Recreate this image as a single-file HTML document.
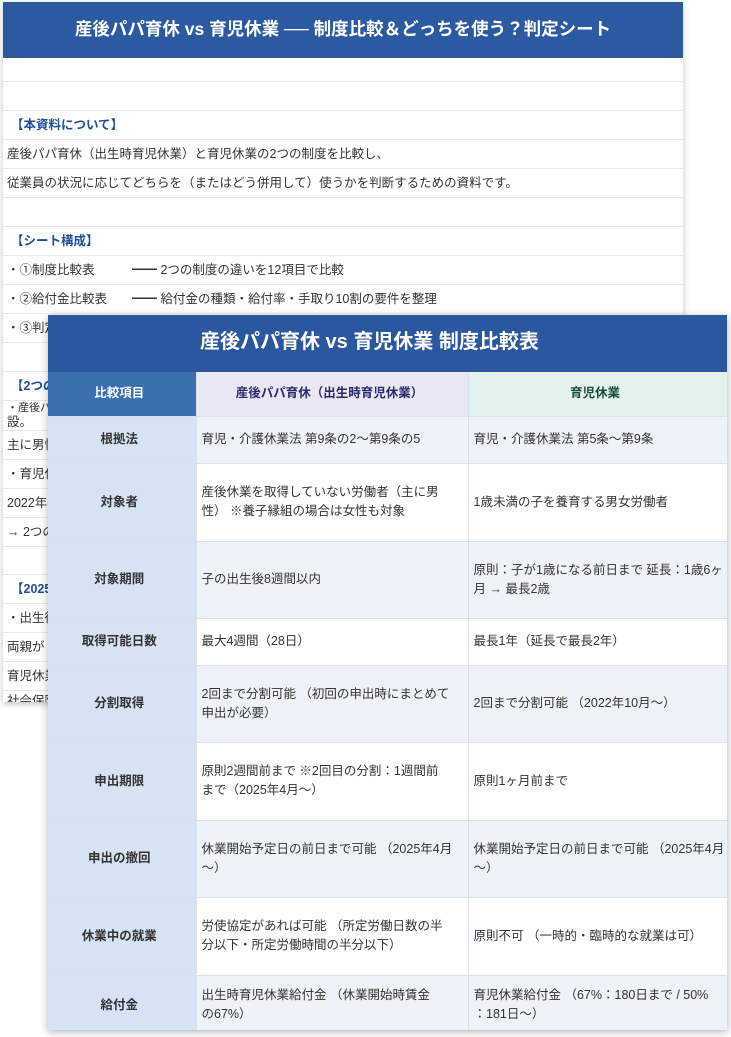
<!DOCTYPE html>
<html><head><meta charset="utf-8"><style>
*{margin:0;padding:0;box-sizing:border-box}
body{width:731px;height:1037px;background:#fff;position:relative;overflow:hidden;font-family:"Liberation Sans","Noto Sans CJK JP",sans-serif;color:#333}
.back{position:absolute;left:3px;top:2px;width:680px;height:700px;background:#fff;box-shadow:0 2px 6px rgba(0,0,0,.25);overflow:hidden}
.back .hd{height:56px;background:#2c5aa0;color:#fff;font-weight:bold;font-size:17.5px;text-align:center;line-height:54px}
.back .r{position:absolute;left:0;width:680px;border-bottom:1px solid #e6e9ee;font-size:12.5px;padding-left:4px;white-space:nowrap}
.blue{color:#1f4f9a;font-weight:bold}
.front{position:absolute;left:48px;top:315px;width:679px;height:715px;background:#fff;box-shadow:0 2px 8px rgba(0,0,0,.3);overflow:hidden}
.front .hd{height:57px;background:#2b579e;color:#fff;font-weight:bold;font-size:20px;line-height:54px;padding-left:152px}
table{border-collapse:collapse;table-layout:fixed;width:679px;font-size:12.5px}
td,th{border-right:1px solid #d8e0ec;border-bottom:1px solid #d8e0ec;vertical-align:middle;padding:0 10px 0 5px;line-height:19px}
th{font-weight:bold;height:44px;font-size:12.5px}
td.k{background:#d6e3f5;text-align:center;font-weight:bold;color:#333}
tr.a td{background:#eef3fa}
tr.a td.k,tr.b td.k{background:#d6e3f5}
</style></head><body>
<div class="back">
<div class="hd">産後パパ育休 vs 育児休業 ── 制度比較＆どっちを使う？判定シート</div>
<div class="r" style="top:56px;height:24px"></div>
<div class="r" style="top:80px;height:29px"></div>
<div class="r blue" style="top:109px;height:29px;line-height:29px;padding-left:8px">【本資料について】</div>
<div class="r" style="top:138px;height:29px;line-height:29px">産後パパ育休（出生時育児休業）と育児休業の2つの制度を比較し、</div>
<div class="r" style="top:167px;height:29px;line-height:29px">従業員の状況に応じてどちらを（またはどう併用して）使うかを判断するための資料です。</div>
<div class="r" style="top:196px;height:29px"></div>
<div class="r blue" style="top:225px;height:29px;line-height:29px;padding-left:8px">【シート構成】</div>
<div class="r" style="top:254px;height:29px;line-height:29px">・①制度比較表　　　━━ 2つの制度の違いを12項目で比較</div>
<div class="r" style="top:283px;height:29px;line-height:29px">・②給付金比較表　　━━ 給付金の種類・給付率・手取り10割の要件を整理</div>
<div class="r" style="top:312px;height:29px;line-height:29px">・③判定</div>
<div class="r" style="top:341px;height:29px"></div>
<div class="r blue" style="top:370px;height:29px;line-height:29px;padding-left:8px">【2つの</div>
<div class="r" style="top:399px;height:30px;font-size:11px;line-height:14px">・産後パ<br><span style="font-size:12.5px">設。</span></div>
<div class="r" style="top:429px;height:29px;line-height:29px">主に男性</div>
<div class="r" style="top:458px;height:29px;line-height:29px">・育児休</div>
<div class="r" style="top:487px;height:29px;line-height:29px">2022年</div>
<div class="r" style="top:516px;height:29px;line-height:29px">→ 2つの</div>
<div class="r" style="top:545px;height:28px"></div>
<div class="r blue" style="top:573px;height:29px;line-height:29px;padding-left:8px">【2025</div>
<div class="r" style="top:602px;height:29px;line-height:29px">・出生後</div>
<div class="r" style="top:631px;height:29px;line-height:29px">両親が</div>
<div class="r" style="top:660px;height:29px;line-height:29px">育児休業</div>
<div class="r" style="top:689px;height:29px;line-height:20px">社会保険</div>
</div>
<div class="front">
<div class="hd">産後パパ育休 vs 育児休業 制度比較表</div>
<table>
<colgroup><col style="width:148px"><col style="width:272px"><col style="width:259px"></colgroup>
<tr><th style="background:#3a6fb0;color:#fff">比較項目</th><th style="background:#e8e8f4;color:#2a2a6a">産後パパ育休（出生時育児休業）</th><th style="background:#e2f3ee;color:#1d4a3a">育児休業</th></tr>
<tr class="a" style="height:47px"><td class="k">根拠法</td><td>育児・介護休業法 第9条の2〜第9条の5</td><td>育児・介護休業法 第5条〜第9条</td></tr>
<tr class="b" style="height:78px"><td class="k">対象者</td><td>産後休業を取得していない労働者（主に男<br>性） ※養子縁組の場合は女性も対象</td><td>1歳未満の子を養育する男女労働者</td></tr>
<tr class="a" style="height:77px"><td class="k">対象期間</td><td>子の出生後8週間以内</td><td style="white-space:nowrap">原則：子が1歳になる前日まで 延長：1歳6ヶ<br>月 → 最長2歳</td></tr>
<tr class="b" style="height:47px"><td class="k">取得可能日数</td><td>最大4週間（28日）</td><td>最長1年（延長で最長2年）</td></tr>
<tr class="a" style="height:77px"><td class="k">分割取得</td><td>2回まで分割可能 （初回の申出時にまとめて<br>申出が必要）</td><td>2回まで分割可能 （2022年10月〜）</td></tr>
<tr class="b" style="height:78px"><td class="k">申出期限</td><td>原則2週間前まで ※2回目の分割：1週間前<br>まで（2025年4月〜）</td><td>原則1ヶ月前まで</td></tr>
<tr class="a" style="height:77px"><td class="k">申出の撤回</td><td>休業開始予定日の前日まで可能 （2025年4月<br>〜）</td><td style="white-space:nowrap">休業開始予定日の前日まで可能 （2025年4月<br>〜）</td></tr>
<tr class="b" style="height:78px"><td class="k">休業中の就業</td><td>労使協定があれば可能 （所定労働日数の半<br>分以下・所定労働時間の半分以下）</td><td>原則不可 （一時的・臨時的な就業は可）</td></tr>
<tr class="a" style="height:60px"><td class="k">給付金</td><td>出生時育児休業給付金 （休業開始時賃金<br>の67%）</td><td style="white-space:nowrap">育児休業給付金 （67%：180日まで / 50%<br>：181日〜）</td></tr>
</table>
</div>
</body></html>
